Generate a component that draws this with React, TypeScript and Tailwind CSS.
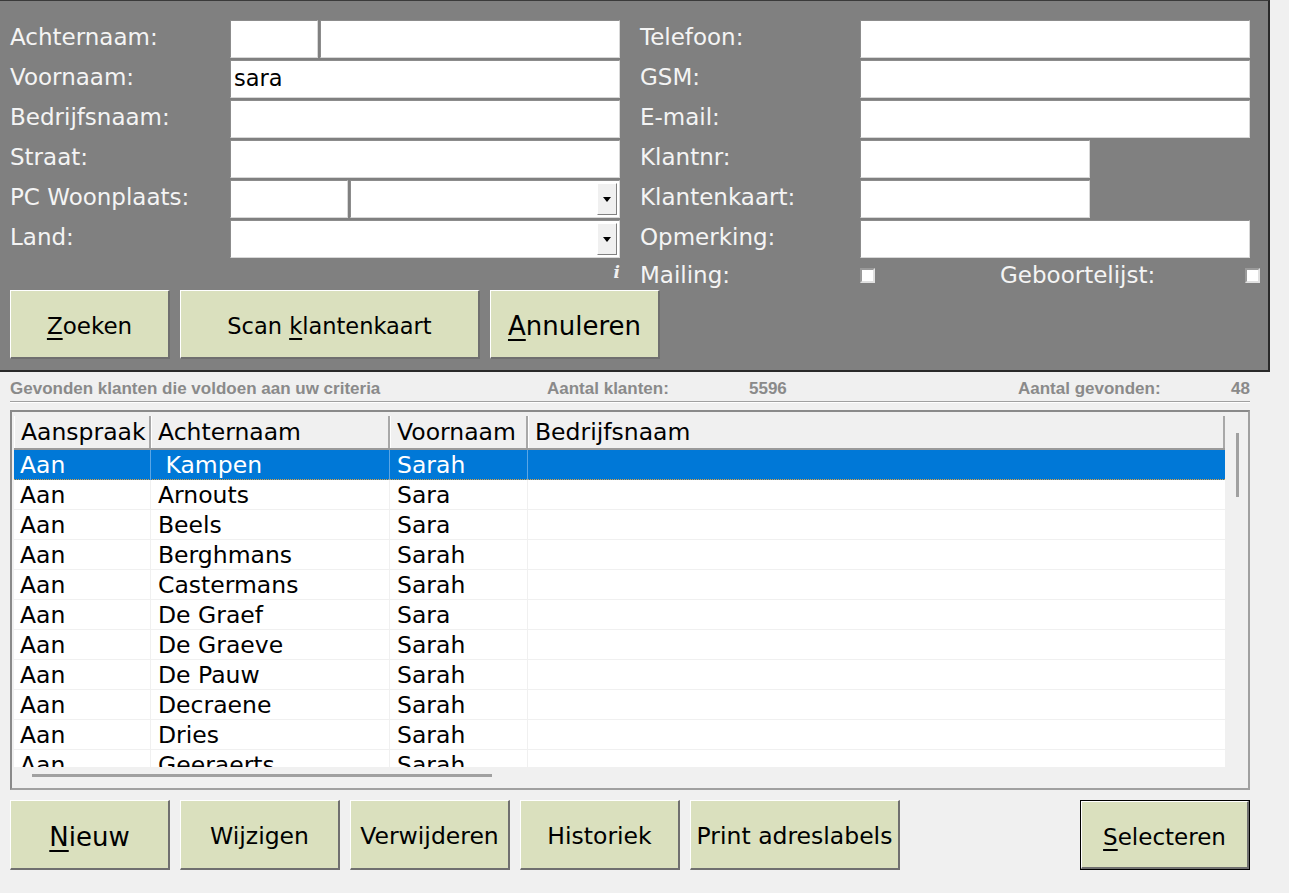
import type { FC, ReactNode } from "react";

const rows: [string, string, string][] = [
  ["Aan", " Kampen", "Sarah"],
  ["Aan", "Arnouts", "Sara"],
  ["Aan", "Beels", "Sara"],
  ["Aan", "Berghmans", "Sarah"],
  ["Aan", "Castermans", "Sarah"],
  ["Aan", "De Graef", "Sara"],
  ["Aan", "De Graeve", "Sarah"],
  ["Aan", "De Pauw", "Sarah"],
  ["Aan", "Decraene", "Sarah"],
  ["Aan", "Dries", "Sarah"],
  ["Aan", "Geeraerts", "Sarah"],
];

const Field: FC<{ w: string; value?: string; combo?: boolean }> = ({ w, value, combo }) => (
  <div
    className={`${w} h-[38px] relative bg-white border border-t-[#8c8c8c] border-l-[#8c8c8c] border-r-[#d8d8d8] border-b-[#d8d8d8] text-[22.5px] text-black pl-[3px] leading-[34px]`}
  >
    {value}
    {combo && (
      <div className="absolute right-[2px] top-[2px] bottom-[2px] w-[20px] bg-[#f0f0f0] border border-t-white border-l-white border-r-[#808080] border-b-[#808080] flex items-center justify-center">
        <div className="w-0 h-0 border-l-[4px] border-r-[4px] border-t-[5px] border-l-transparent border-r-transparent border-t-black" />
      </div>
    )}
  </div>
);

const Label: FC<{ children: ReactNode; w?: string }> = ({ children, w = "w-[220px]" }) => (
  <div className={`${w} text-[23px] text-[#f4f4f4] pb-[6px] whitespace-nowrap`}>{children}</div>
);

const Check = () => (
  <div className="w-[15px] h-[15px] bg-white border-2 border-t-[#9a9a9a] border-l-[#9a9a9a] border-r-[#e0e0e0] border-b-[#e0e0e0]" />
);

const Btn: FC<{ w: string; h?: string; size?: string; children: ReactNode; def?: boolean }> = ({
  w,
  h = "h-[70px]",
  size = "text-[23.5px]",
  children,
  def,
}) => (
  <div className={`${w} ${h} ${def ? "border border-black" : ""}`}>
    <div
      className={`w-full h-full bg-[#dae0be] border border-t-white border-l-white border-r-[#6f6f6f] border-b-[#6f6f6f] border-b-2 border-r-2 flex items-center justify-center pt-[5px] text-black ${size} whitespace-nowrap`}
    >
      {children}
    </div>
  </div>
);

const U: FC<{ children: ReactNode }> = ({ children }) => <span className="underline underline-offset-[4px] decoration-[1.5px]">{children}</span>;

export default function App() {
  return (
    <div className="w-[1289px] h-[893px] bg-[#f0f0f0] font-['DejaVu_Sans',sans-serif] overflow-hidden">
      {/* search panel */}
      <div className="w-[1270px] h-[372px] bg-[#808080] border-t border-t-[#3a3a3a] border-r-2 border-b-2 border-[#2a2a2a] pl-[10px] pt-[19px]">
        <div className="flex gap-[20px]">
          <div className="w-[610px] flex flex-col">
            <div className="h-[40px] flex items-start">
              <Label>Achternaam:</Label>
              <div className="flex gap-[2px]">
                <Field w="w-[88px]" />
                <Field w="w-[300px]" />
              </div>
            </div>
            <div className="h-[40px] flex items-start">
              <Label>Voornaam:</Label>
              <Field w="w-[390px]" value="sara" />
            </div>
            <div className="h-[40px] flex items-start">
              <Label>Bedrijfsnaam:</Label>
              <Field w="w-[390px]" />
            </div>
            <div className="h-[40px] flex items-start">
              <Label>Straat:</Label>
              <Field w="w-[390px]" />
            </div>
            <div className="h-[40px] flex items-start">
              <Label>PC Woonplaats:</Label>
              <div className="flex gap-[2px]">
                <Field w="w-[118px]" />
                <Field w="w-[270px]" combo />
              </div>
            </div>
            <div className="h-[40px] flex items-start">
              <Label>Land:</Label>
              <Field w="w-[390px]" combo />
            </div>
            <div className="h-[30px] flex justify-end items-start">
              <span className="font-['DejaVu_Serif',serif] italic font-bold text-[17px] text-[#f0f0f0] leading-[20px] mt-[2px]">i</span>
            </div>
          </div>
          <div className="flex-1 flex flex-col">
            <div className="h-[40px] flex items-start">
              <Label>Telefoon:</Label>
              <Field w="w-[390px]" />
            </div>
            <div className="h-[40px] flex items-start">
              <Label>GSM:</Label>
              <Field w="w-[390px]" />
            </div>
            <div className="h-[40px] flex items-start">
              <Label>E-mail:</Label>
              <Field w="w-[390px]" />
            </div>
            <div className="h-[40px] flex items-start">
              <Label>Klantnr:</Label>
              <Field w="w-[230px]" />
            </div>
            <div className="h-[40px] flex items-start">
              <Label>Klantenkaart:</Label>
              <Field w="w-[230px]" />
            </div>
            <div className="h-[40px] flex items-start">
              <Label>Opmerking:</Label>
              <Field w="w-[390px]" />
            </div>
            <div className="h-[30px] flex items-start">
              <div className="w-[220px] text-[23px] text-[#f4f4f4] leading-[30px]">Mailing:</div>
              <div className="w-[140px] pt-[8px]">
                <Check />
              </div>
              <div className="w-[245px] text-[23px] text-[#f4f4f4] leading-[30px]">Geboortelijst:</div>
              <div className="pt-[8px]">
                <Check />
              </div>
            </div>
          </div>
        </div>
        <div className="flex gap-[10px]">
          <Btn w="w-[160px]" h="h-[69px]" size="text-[23px]">
            <U>Z</U>oeken
          </Btn>
          <Btn w="w-[300px]" h="h-[69px]" size="text-[22.5px]">
            Scan&nbsp;<U>k</U>lantenkaart
          </Btn>
          <Btn w="w-[170px]" h="h-[69px]" size="text-[26px]">
            <U>A</U>nnuleren
          </Btn>
        </div>
      </div>

      {/* status line */}
      <div className="ml-[10px] w-[1240px] h-[30px] flex items-end pb-[4px] border-b border-b-[#a0a0a0] font-['Liberation_Sans',sans-serif] font-bold text-[17px] text-[#8a8a8a] leading-none">
        <div className="w-[537px]">Gevonden klanten die voldoen aan uw criteria</div>
        <div className="w-[202px]">Aantal klanten:</div>
        <div className="w-[269px]">5596</div>
        <div className="flex-1">Aantal gevonden:</div>
        <div>48</div>
      </div>
      <div className="ml-[10px] w-[1240px] h-px bg-white" />

      {/* result list */}
      <div className="ml-[10px] mt-[7px] w-[1240px] h-[380px] border-2 border-t-[#8a8a8a] border-l-[#8a8a8a] border-r-[#a0a0a0] border-b-[#a0a0a0] flex flex-col">
        <div className="flex h-[355px]">
          <div className="w-[1213px] pl-[2px] pt-[4px] overflow-hidden">
            <div className="grid grid-cols-[137px_239px_138px_1fr] h-[34px] bg-[#f0f0f0] border-b-2 border-b-[#9a9a9a] text-[23.5px] text-black leading-[33px]">
              {["Aanspraak", "Achternaam", "Voornaam", "Bedrijfsnaam"].map((h) => (
                <div key={h} className="pl-[6px] border-l border-l-white border-r-2 border-r-[#a8a8a8] whitespace-nowrap overflow-hidden">
                  {h}
                </div>
              ))}
            </div>
            <div className="h-[317px] overflow-hidden bg-white">
              {rows.map((r, i) => (
                <div
                  key={i}
                  className={`grid grid-cols-[137px_239px_138px_1fr] h-[30px] text-[23.5px] leading-[30px] ${
                    i === 0 ? "bg-[#0078d7] text-white border-b border-dotted border-b-[#e0a040]" : "text-black border-b border-b-[#f0f0f0]"
                  }`}
                >
                  <div className={`pl-[6px] whitespace-pre border-r ${i === 0 ? "border-r-[#5aa6e6]" : "border-r-[#f0f0f0]"}`}>{r[0]}</div>
                  <div className={`pl-[7px] whitespace-pre border-r ${i === 0 ? "border-r-[#5aa6e6]" : "border-r-[#f0f0f0]"}`}>{r[1]}</div>
                  <div className={`pl-[7px] whitespace-pre border-r ${i === 0 ? "border-r-[#5aa6e6]" : "border-r-[#f0f0f0]"}`}>{r[2]}</div>
                  <div />
                </div>
              ))}
            </div>
          </div>
          <div className="flex-1 pt-[21px] pl-[11px]">
            <div className="w-[3px] h-[64px] bg-[#a0a0a0]" />
          </div>
        </div>
        <div className="flex-1 pl-[20px] pt-[7px]">
          <div className="w-[460px] h-[3px] bg-[#a0a0a0]" />
        </div>
      </div>

      {/* action buttons */}
      <div className="ml-[10px] mt-[10px] w-[1240px] flex gap-[10px]">
        <Btn w="w-[160px]" size="text-[26px]">
          <U>N</U>ieuw
        </Btn>
        <Btn w="w-[160px]">Wijzigen</Btn>
        <Btn w="w-[160px]">Verwijderen</Btn>
        <Btn w="w-[160px]">Historiek</Btn>
        <Btn w="w-[210px]">Print adreslabels</Btn>
        <div className="flex-1" />
        <Btn w="w-[170px]" size="text-[23px]" def>
          <U>S</U>electeren
        </Btn>
      </div>
    </div>
  );
}
